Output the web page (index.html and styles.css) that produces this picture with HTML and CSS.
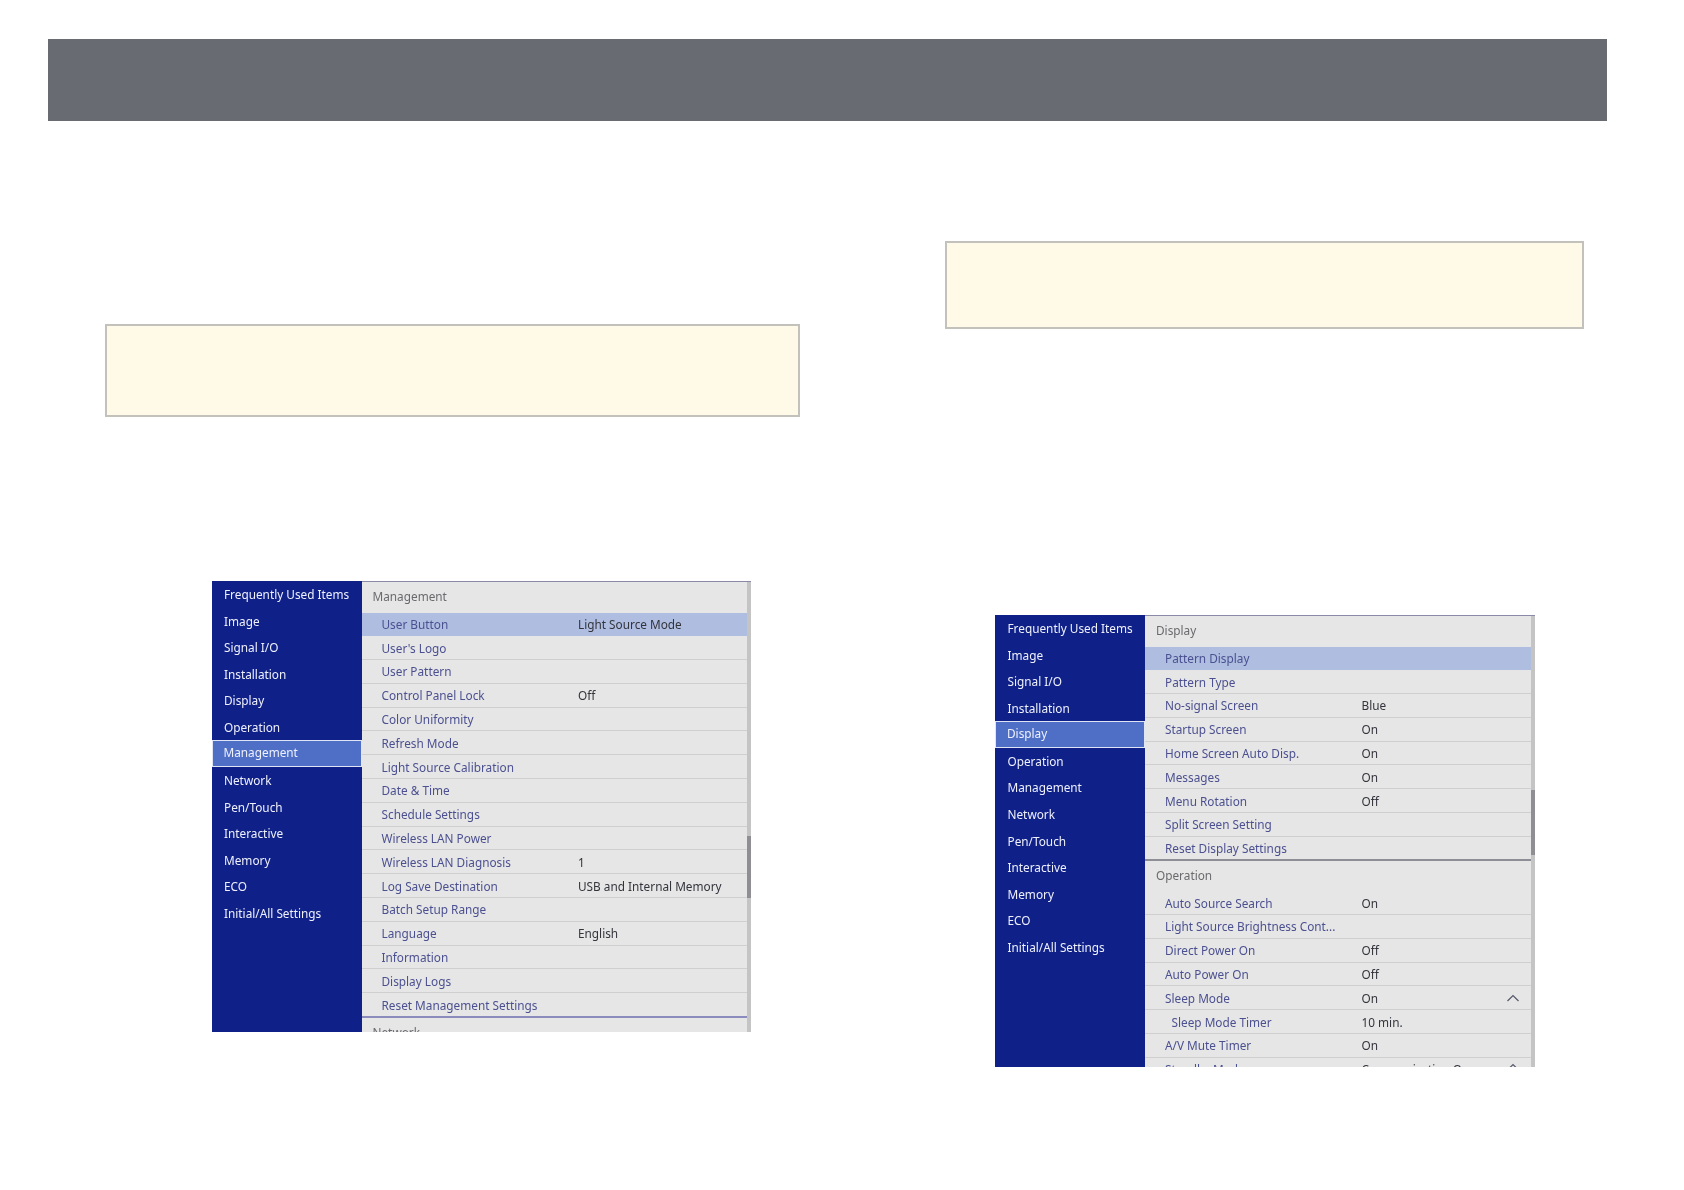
FILE: index.html
```html
<!DOCTYPE html>
<html lang="en">
<head>
<meta charset="utf-8">
<title>Projector menu settings</title>
<link rel="stylesheet" href="styles.css">
</head>
<body>
<header class="topbar"></header>
<main class="columns">
  <section class="col col-left">
    <div class="notice notice-left"></div>
    <div class="screen">
      <ul class="side">
        <li>Frequently Used Items</li><li>Image</li><li>Signal I/O</li><li>Installation</li><li>Display</li><li>Operation</li><li class="on">Management</li><li>Network</li><li>Pen/Touch</li><li>Interactive</li><li>Memory</li><li>ECO</li><li>Initial/All Settings</li>
      </ul>
      <div class="panel">
        <div class="list">
          <div class="head">Management</div>
          <div class="row sel"><span class="k">User Button</span><span class="v">Light Source Mode</span></div>
          <div class="row"><span class="k">User's Logo</span></div>
          <div class="row"><span class="k">User Pattern</span></div>
          <div class="row"><span class="k">Control Panel Lock</span><span class="v">Off</span></div>
          <div class="row"><span class="k">Color Uniformity</span></div>
          <div class="row"><span class="k">Refresh Mode</span></div>
          <div class="row"><span class="k">Light Source Calibration</span></div>
          <div class="row"><span class="k">Date &amp; Time</span></div>
          <div class="row"><span class="k">Schedule Settings</span></div>
          <div class="row"><span class="k">Wireless LAN Power</span></div>
          <div class="row"><span class="k">Wireless LAN Diagnosis</span><span class="v">1</span></div>
          <div class="row"><span class="k">Log Save Destination</span><span class="v">USB and Internal Memory</span></div>
          <div class="row"><span class="k">Batch Setup Range</span></div>
          <div class="row"><span class="k">Language</span><span class="v">English</span></div>
          <div class="row"><span class="k">Information</span></div>
          <div class="row"><span class="k">Display Logs</span></div>
          <div class="row last"><span class="k">Reset Management Settings</span></div>
          <div class="head">Network</div>
        </div>
        <div class="track"><div class="thumb thumb-left"></div></div>
      </div>
    </div>
  </section>
  <section class="col col-right">
    <div class="notice notice-right"></div>
    <div class="screen">
      <ul class="side">
        <li>Frequently Used Items</li><li>Image</li><li>Signal I/O</li><li>Installation</li><li class="on">Display</li><li>Operation</li><li>Management</li><li>Network</li><li>Pen/Touch</li><li>Interactive</li><li>Memory</li><li>ECO</li><li>Initial/All Settings</li>
      </ul>
      <div class="panel">
        <div class="list">
          <div class="head">Display</div>
          <div class="row sel"><span class="k">Pattern Display</span></div>
          <div class="row"><span class="k">Pattern Type</span></div>
          <div class="row"><span class="k">No-signal Screen</span><span class="v">Blue</span></div>
          <div class="row"><span class="k">Startup Screen</span><span class="v">On</span></div>
          <div class="row"><span class="k">Home Screen Auto Disp.</span><span class="v">On</span></div>
          <div class="row"><span class="k">Messages</span><span class="v">On</span></div>
          <div class="row"><span class="k">Menu Rotation</span><span class="v">Off</span></div>
          <div class="row"><span class="k">Split Screen Setting</span></div>
          <div class="row last grey"><span class="k">Reset Display Settings</span></div>
          <div class="head">Operation</div>
          <div class="row"><span class="k">Auto Source Search</span><span class="v">On</span></div>
          <div class="row"><span class="k">Light Source Brightness Cont...</span></div>
          <div class="row"><span class="k">Direct Power On</span><span class="v">Off</span></div>
          <div class="row"><span class="k">Auto Power On</span><span class="v">Off</span></div>
          <div class="row"><span class="k">Sleep Mode</span><span class="v">On</span>
            <svg class="chev" width="14" height="8" viewBox="0 0 14 8" aria-hidden="true"><path d="M1.5 7 7 1.5 12.5 7" fill="none" stroke="#55586a" stroke-width="1.2"/></svg>
          </div>
          <div class="row sub"><span class="k">Sleep Mode Timer</span><span class="v">10 min.</span></div>
          <div class="row"><span class="k">A/V Mute Timer</span><span class="v">On</span></div>
          <div class="row"><span class="k">Standby Mode</span><span class="v">Communication On</span>
            <svg class="chev chev-clipped" width="14" height="8" viewBox="0 0 14 8" aria-hidden="true"><path d="M1.5 7 7 1.5 12.5 7" fill="none" stroke="#55586a" stroke-width="1.2"/></svg>
          </div>
        </div>
        <div class="track"><div class="thumb thumb-right"></div></div>
      </div>
    </div>
  </section>
</main>
</body>
</html>
```
FILE: styles.css
```css
* { box-sizing: border-box; }
html, body { margin: 0; padding: 0; background: #fff; }
body { width: 1684px; height: 1190px; overflow: hidden; padding: 39px 0 0 48px; font-family: "Noto Sans", sans-serif; }
.topbar { width: 1559px; height: 82px; background: #696b73; }
.columns { display: grid; grid-template-columns: 897px 639px; }
.col { display: flex; flex-direction: column; }
.notice { background: #fffae8; border: 2px solid #c2c1bc; }
.notice-left { width: 695px; height: 93px; margin: 203px 0 0 57px; }
.notice-right { width: 639px; height: 87.5px; margin-top: 120px; }
.screen { display: flex; overflow: hidden; filter: blur(.35px); }
.col-left .screen { width: 539px; height: 451px; margin: 164px 0 0 163.5px; }
.col-right .screen { width: 540px; height: 452px; margin: 286.5px 0 0 50px; }
.side { list-style: none; margin: 0; padding: 0; flex: 0 0 150px; background: #0f2088; color: #eef1fa; font-size: 11.8px; }
.side li { height: 26.58px; line-height: 26.58px; padding-left: 12.5px; white-space: nowrap; }
.side li.on { background: #4f6fc7; border: 1.5px solid #dfe5f5; padding-left: 11px; line-height: 23.6px; }
.panel { flex: 1; display: flex; background: #e6e6e6; border-top: 1px solid #8a8aa8; min-width: 0; }
.list { flex: 1; min-width: 0; }
.head { height: 30.5px; line-height: 29.5px; padding-left: 11px; font-size: 11.8px; color: #6a6a6e; }
.row { position: relative; display: flex; align-items: center; height: 23.8px; padding-left: 20px; border-bottom: 1px solid #cfcfcf; font-size: 11.8px; white-space: nowrap; }
.row .k { flex: 0 0 196.5px; color: #4b5090; }
.row .v { color: #33343c; }
.row.sel { background: #aebde0; border-bottom-color: #aebde0; }
.row.sub { padding-left: 26.5px; }
.row.sub .k { flex-basis: 190px; }
.row.last { height: 24.5px; border-bottom: 2px solid #8b8bbd; }
.row.last.grey { height: 23.8px; border-bottom-color: #8e8f96; }
.chev { position: absolute; right: 11px; top: 7.5px; }
.chev-clipped { top: 5px; }
.track { flex: 0 0 4px; background: #c4c4c4; }
.thumb { width: 100%; background: #8f8f93; }
.thumb-left { height: 62px; margin-top: 254px; }
.thumb-right { height: 65px; margin-top: 174px; }
```
